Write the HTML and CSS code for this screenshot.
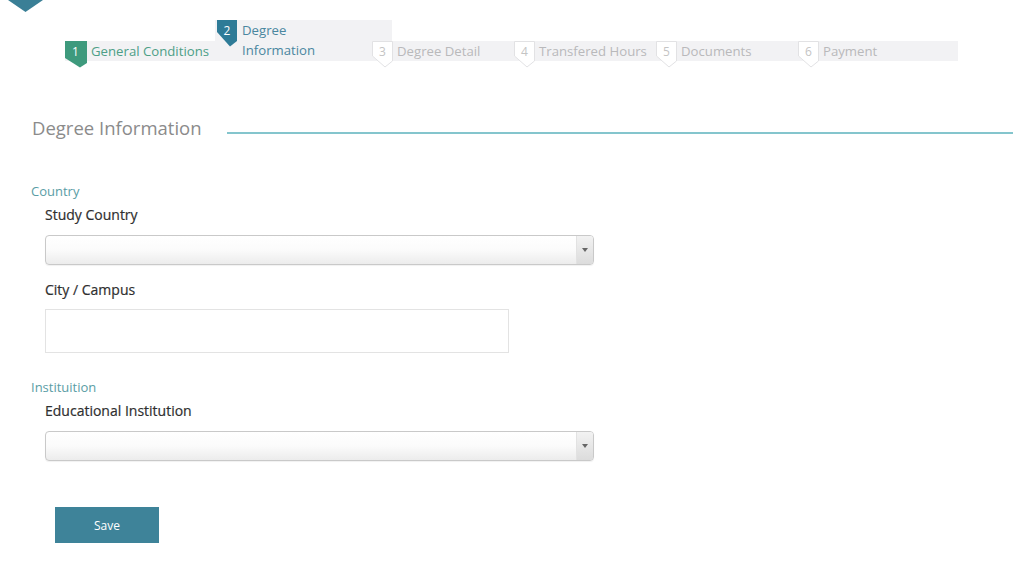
FILE: index.html
```html
<!DOCTYPE html>
<html>
<head>
<meta charset="utf-8">
<link rel="stylesheet" href="styles.css">
</head>
<body>
<div class="logo">
  <svg width="36" height="12" viewBox="0 0 36 12"><path d="M0 0 H35 L17.5 12 Z" fill="#3a7f96"/></svg>
</div>
<div class="steps">
  <div class="step step1 done">
    <svg class="badge" width="22" height="27" viewBox="0 0 22 27"><path d="M0 0 H22 V22 L15 26.5 L0 17 Z" fill="#3e9a7d"/></svg>
    <span class="num">1</span>
    <span class="label">General Conditions</span>
  </div>
  <div class="step step2 active">
    <svg class="badge" width="20" height="27" viewBox="0 0 20 27"><path d="M0 0 H20 V21 L13 26.5 L0 12 Z" fill="#2e7b97"/></svg>
    <span class="num">2</span>
    <span class="label">Degree<br>Information</span>
  </div>
  <div class="step step3">
    <svg class="badge" width="21" height="27" viewBox="0 0 21 27"><path d="M0.5 0.5 H20.5 V20 L13 26 L0.5 15 Z" fill="#ffffff" stroke="#e2e2e4"/></svg>
    <span class="num">3</span>
    <span class="label">Degree Detail</span>
  </div>
  <div class="step">
    <svg class="badge" width="21" height="27" viewBox="0 0 21 27"><path d="M0.5 0.5 H20.5 V20 L13 26 L0.5 15 Z" fill="#ffffff" stroke="#e2e2e4"/></svg>
    <span class="num">4</span>
    <span class="label">Transfered Hours</span>
  </div>
  <div class="step">
    <svg class="badge" width="21" height="27" viewBox="0 0 21 27"><path d="M0.5 0.5 H20.5 V20 L13 26 L0.5 15 Z" fill="#ffffff" stroke="#e2e2e4"/></svg>
    <span class="num">5</span>
    <span class="label">Documents</span>
  </div>
  <div class="step last">
    <svg class="badge" width="21" height="27" viewBox="0 0 21 27"><path d="M0.5 0.5 H20.5 V20 L13 26 L0.5 15 Z" fill="#ffffff" stroke="#e2e2e4"/></svg>
    <span class="num">6</span>
    <span class="label">Payment</span>
  </div>
</div>

<div class="title-row">
  <h1 class="title">Degree Information</h1>
  <div class="rule"></div>
</div>

<form class="form">
  <div class="section">Country</div>
  <div class="field-label">Study Country</div>
  <div class="select"><div class="arrow"><span class="tri"></span></div></div>
  <div class="field-label city">City / Campus</div>
  <div class="input"></div>
  <div class="section inst">Instituition</div>
  <div class="field-label">Educational Institution</div>
  <div class="select"><div class="arrow"><span class="tri"></span></div></div>
  <button type="button" class="save">Save</button>
</form>
</body>
</html>
```

FILE: styles.css
```css
* { box-sizing: border-box; }
html, body { margin: 0; padding: 0; background: #ffffff; }
body {
  font-family: "Open Sans", "Noto Sans", sans-serif;
  width: 1024px;
  height: 575px;
  overflow: hidden;
}
.logo {
  height: 12px;
  padding-left: 8px;
  line-height: 0;
}
.logo svg { display: block; }

.steps {
  display: flex;
  align-items: flex-end;
  margin-top: 8px;
  margin-left: 65px;
  width: 893px;
}
.step {
  position: relative;
  display: flex;
  align-items: flex-start;
  height: 20px;
  background: #f2f2f4;
  width: 142px;
  flex: none;
}
.step1 { width: 150px; }
.step2 { width: 177px; height: 41px; padding-left: 2px; }
.step3 { margin-left: -20px; width: 142px; }
.last { flex: 1 1 auto; }
.badge {
  display: block;
  flex: none;
}
.num {
  position: absolute;
  left: 0;
  top: 0;
  width: 21px;
  text-align: center;
  font-size: 12px;
  line-height: 21px;
  color: #c4c4c4;
}
.step2 .num { left: 2px; width: 20px; }
.done .num, .active .num { color: #ffffff; }
.label {
  margin-left: 4px;
  font-size: 13.2px;
  line-height: 20px;
  color: #b9b9bb;
  white-space: nowrap;
}
.done .label { color: #4d9f87; margin-left: 4px; }
.active .label { color: #4a87a0; margin-left: 5px; }

.title-row {
  display: flex;
  align-items: center;
  margin-top: 55px;
  padding-left: 32px;
  padding-right: 11px;
}
.title {
  margin: 0;
  font-weight: normal;
  font-size: 18.5px;
  line-height: 24px;
  color: #8b8b8b;
  white-space: nowrap;
}
.rule {
  flex: 1;
  height: 2px;
  margin-left: 25px;
  margin-top: 10px;
  background: #84c5cd;
}

.form {
  display: flex;
  flex-direction: column;
  align-items: flex-start;
  margin: 0;
  padding-left: 31px;
}
.section {
  margin-top: 42px;
  font-size: 13px;
  line-height: 18px;
  color: #5a9da5;
}
.section.inst { margin-top: 25px; }
.field-label {
  margin-top: 5px;
  margin-left: 14px;
  font-size: 14px;
  line-height: 20px;
  color: #2f2f2f;
  -webkit-text-stroke: 0.2px #2f2f2f;
}
.field-label.city { margin-top: 15px; }
.select {
  display: flex;
  justify-content: flex-end;
  margin-top: 10px;
  margin-left: 14px;
  width: 549px;
  height: 30px;
  border: 1px solid #c9c9c9;
  border-radius: 4px;
  background: linear-gradient(#ffffff 0%, #fbfbfb 50%, #ececec 100%);
  box-shadow: 0 1px 1px rgba(0,0,0,0.06);
  overflow: hidden;
}
.arrow {
  display: flex;
  align-items: center;
  justify-content: center;
  width: 17px;
  height: 100%;
  background: linear-gradient(#f2f2f2, #dcdcdc);
  border-left: 1px solid #e2e2e2;
}
.tri {
  width: 0;
  height: 0;
  border-left: 3px solid transparent;
  border-right: 3px solid transparent;
  border-top: 4px solid #666666;
}
.input {
  margin-top: 9px;
  margin-left: 14px;
  width: 464px;
  height: 44px;
  border: 1px solid #e3e3e3;
  background: #ffffff;
}
.save {
  margin-top: 46px;
  margin-left: 24px;
  width: 104px;
  height: 36px;
  border: none;
  background: #3e8399;
  color: #ffffff;
  font-family: "Open Sans", "Noto Sans", sans-serif;
  font-size: 12px;
  padding: 0;
}
```
